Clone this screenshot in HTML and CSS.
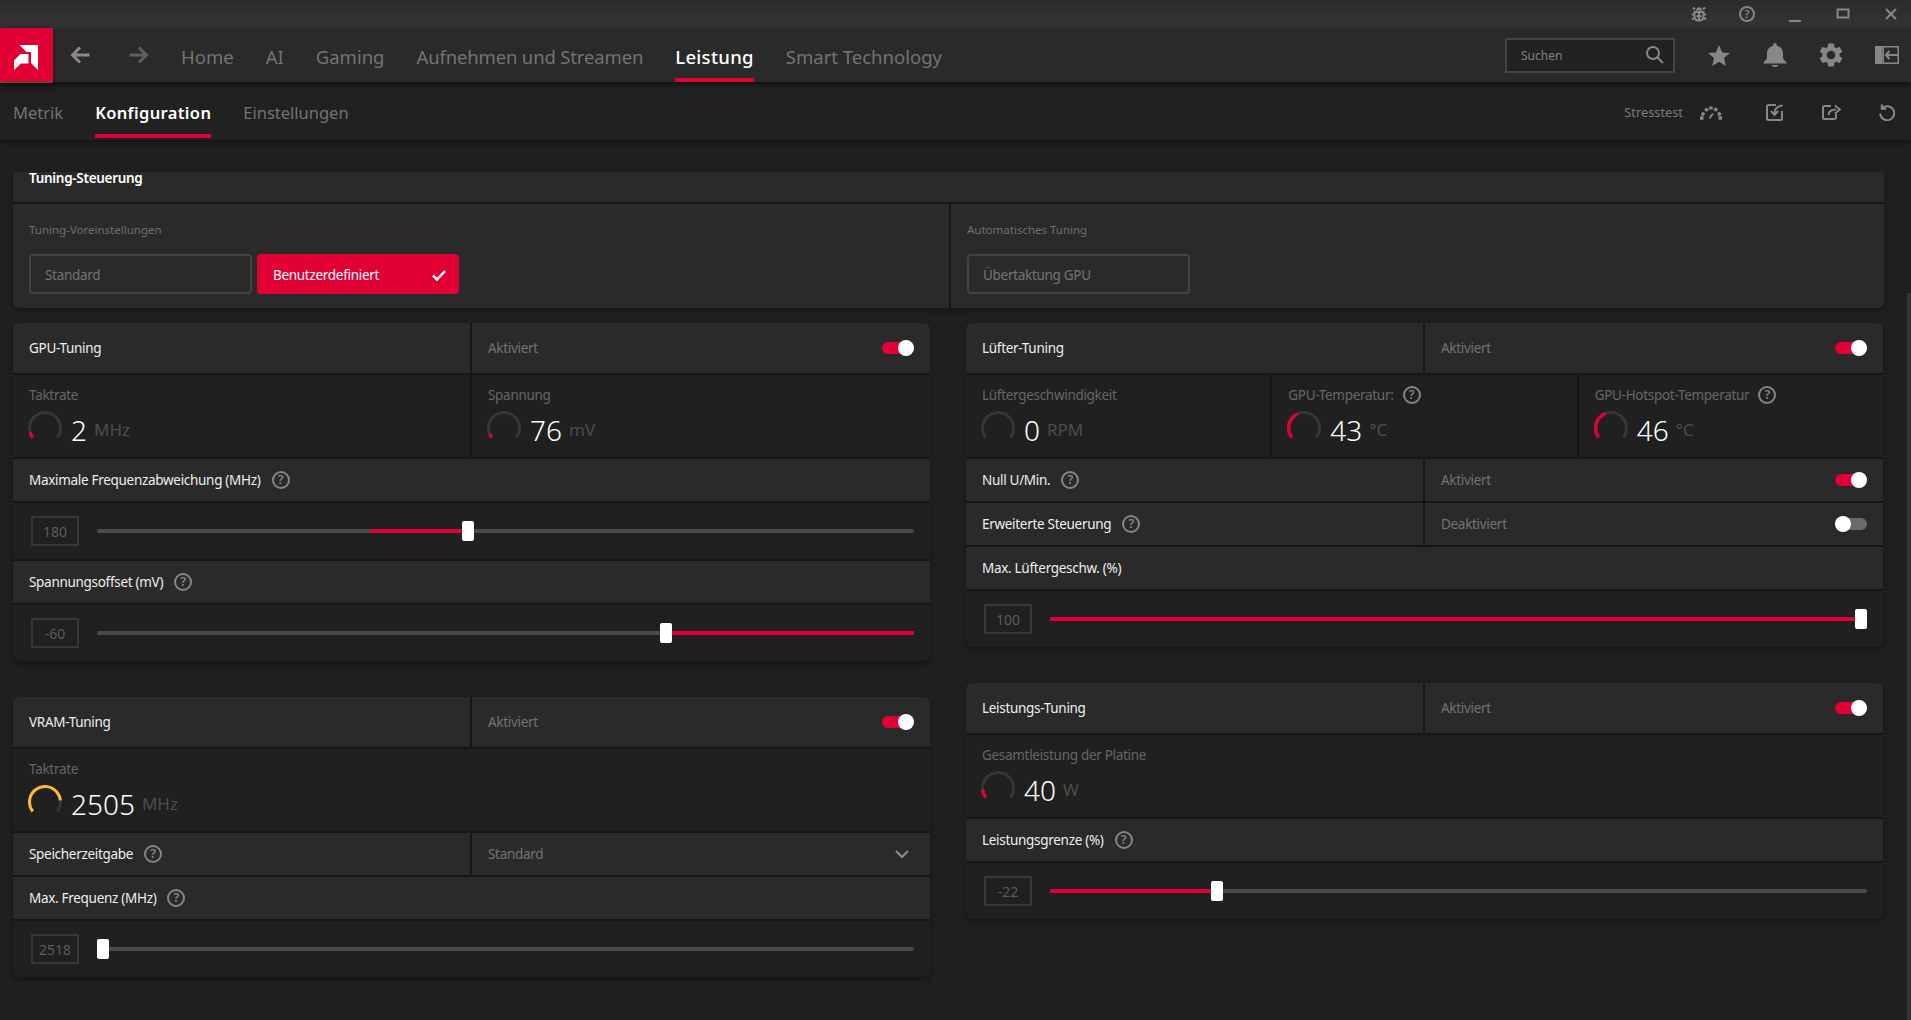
FILE: index.html
```html
<!DOCTYPE html>
<html lang="de">
<head>
<meta charset="utf-8">
<title>AMD Software</title>
<link rel="stylesheet" href="styles.css">
</head>
<body>
<div class="app">
  <header class="titlebar">
    <span class="win"><svg width="16" height="16" viewBox="0 0 16 16"><path class="ic-fill" d="M5 4.500c0-2 1.400-3.300 3-3.300s3 1.300 3 3.300z"/><path class="ic-line" d="M3.500 6h9v4.500c0 2.500-2 4-4.500 4s-4.500-1.500-4.500-4zM8 6v8.500M3.500 8.500H.8M12.500 8.500h2.700M3.500 11.500L1 13.500M12.500 11.500l2.500 2M4 3.500L2 1.500M12 3.500l2-2M5.800 9.500l1.400 1.500M10.200 9.500L8.800 11"/></svg></span>
    <span class="win"><span class="help help-top">?</span></span>
    <span class="win"><svg width="16" height="16" viewBox="0 0 16 16"><path class="ic-line" d="M2 15h12"/></svg></span>
    <span class="win"><svg width="16" height="16" viewBox="0 0 16 16"><path class="ic-line" d="M2.500 3.500h11v8h-11z"/></svg></span>
    <span class="win"><svg width="16" height="16" viewBox="0 0 16 16"><path class="ic-line" d="M3 3l10 10M13 3L3 13"/></svg></span>
  </header>

  <nav class="mainnav">
    <div class="logo"><svg width="24" height="25" viewBox="0 0 24 25"><path fill="#fff" d="M5.500 0H24v25l-7-7V7H12.500z"/><path fill="#fff" d="M0 25v-9.500L6.500 9h8v9.500H7L0 25z"/></svg></div>
    <svg class="arrow back" width="20" height="18" viewBox="0 0 20 18"><path d="M10 1.500L2.500 9l7.500 7.500M3 9h16.500"/></svg>
    <svg class="arrow fwd" width="20" height="18" viewBox="0 0 20 18"><path d="M10 1.500L17.500 9 10 16.500M17 9H.5"/></svg>
    <ul class="tabs main-tabs">
      <li>Home</li>
      <li>AI</li>
      <li>Gaming</li>
      <li class="tight">Aufnehmen und Streamen</li>
      <li class="active">Leistung</li>
      <li>Smart Technology</li>
    </ul>
    <div class="nav-right">
      <div class="search">
        <span>Suchen</span>
        <svg width="18" height="18" viewBox="0 0 18 18"><circle class="ic-line" cx="7" cy="7" r="6"/><path class="ic-line" d="M11.500 11.500L17 17"/></svg>
      </div>
      <span class="navicon"><svg width="22" height="21" viewBox="0 0 22 21"><path class="ic-fill" d="M11 0l3.200 7.400 7.800.6-6 5.100L17.800 21 11 16.800 4.200 21 6 13.100 0 8l7.800-.6z"/></svg></span>
      <span class="navicon"><svg width="24" height="24" viewBox="0 0 24 24"><path class="ic-fill" d="M12 0c1 0 1.800.8 1.800 1.800v.9C18 3.600 20 6.800 20 11v4.500l3.500 4V20.500H.5v-1l3.500-4V11c0-4.200 2-7.400 6.200-8.300v-.9C10.200.8 11 0 12 0zM8.500 22h7c-.5 1.300-2 2-3.500 2s-3-.7-3.500-2z"/></svg></span>
      <span class="navicon"><svg width="24" height="24" viewBox="2.600 2 18.800 20"><path class="ic-fill" d="M19.140 12.940c.04-.3.06-.61.06-.94 0-.32-.02-.64-.07-.94l2.030-1.580a.49.49 0 0 0 .12-.61l-1.920-3.320a.488.488 0 0 0-.59-.22l-2.390.96c-.5-.38-1.030-.7-1.620-.94l-.36-2.540a.484.484 0 0 0-.48-.41h-3.840c-.24 0-.43.17-.47.41l-.36 2.540c-.59.24-1.130.57-1.620.94l-2.390-.96c-.22-.08-.47 0-.59.22L2.740 8.870c-.12.21-.08.47.12.61l2.030 1.580c-.05.3-.09.63-.09.94s.02.64.07.94l-2.030 1.580a.49.49 0 0 0-.12.61l1.920 3.320c.12.22.37.29.59.22l2.390-.96c.5.38 1.030.7 1.620.94l.36 2.540c.05.24.24.41.48.41h3.840c.24 0 .44-.17.47-.41l.36-2.540c.59-.24 1.130-.56 1.620-.94l2.390.96c.22.08.47 0 .59-.22l1.920-3.320c.12-.22.07-.47-.12-.61l-2.010-1.580zM12 15.600c-1.980 0-3.600-1.620-3.600-3.600s1.620-3.600 3.600-3.600 3.600 1.620 3.600 3.600-1.620 3.600-3.600 3.600z"/></svg></span>
      <span class="navicon"><svg width="24" height="18" viewBox="0 0 24 18"><path class="ic-fill" d="M0 0h7.500v18H0z"/><path class="ic-fill" d="M7.500 0H24v18H7.500zm1.500 1.500v15h13.500v-15z" fill-rule="evenodd"/><path class="ic-line" d="M14.500 5L10.800 9l3.700 4M11 9h12"/></svg></span>
    </div>
  </nav>

  <nav class="subnav">
    <ul class="tabs sub-tabs">
      <li>Metrik</li>
      <li class="active">Konfiguration</li>
      <li>Einstellungen</li>
    </ul>
    <div class="sub-right">
      <span class="stress">Stresstest</span>
      <span class="navicon gauge-ic"><svg width="24" height="15" viewBox="0 0 24 15"><path class="ic-dash" d="M1 13h3.500M2.500 8.200l3 1.500M6.500 3.500l2 2.500M11.800 1.500l.2 3M17.500 3.200L16 6M21.800 8l-3 1.700M19.500 13H23"/><path class="ic-line" d="M10.500 13.500l3.500-5"/></svg></span>
      <span class="navicon"><svg width="18" height="17" viewBox="0 0 18 17"><path class="ic-line" d="M10 1H2.500A1.500 1.500 0 0 0 1 2.500v12A1.500 1.500 0 0 0 2.500 16h12a1.500 1.500 0 0 0 1.500-1.500V7"/><path class="ic-line" d="M16.500 1.500C11.500 2 8.500 5 8.500 9.500M5 6.800L8.500 11l3.700-4"/></svg></span>
      <span class="navicon"><svg width="19" height="16" viewBox="0 0 19 16"><path class="ic-line" d="M9 2H2.500A1.500 1.500 0 0 0 1 3.500v10A1.500 1.500 0 0 0 2.500 15h10a1.500 1.500 0 0 0 1.500-1.500V10"/><path class="ic-line" d="M6.500 11c.3-3.500 3-5.500 7.500-5.500M13 1.500L17.800 5.500 13 9.500"/></svg></span>
      <span class="navicon"><svg width="16" height="17" viewBox="0 0 16 17"><path class="ic-line" d="M3 4.500A7 7 0 1 1 1.200 9.500M2.800 .5v4.300h4.300"/></svg></span>
    </div>
  </nav>

  <main class="content">
    <section class="panel panel-top">
      <div class="row-light head-clip"><span class="title strong">Tuning-Steuerung</span></div>
      <div class="split-top">
        <div class="preset">
          <div class="small-label">Tuning-Voreinstellungen</div>
          <div class="btn-row">
            <div class="btn">Standard</div>
            <div class="btn btn-on">Benutzerdefiniert<svg width="14" height="11" viewBox="0 0 14 11"><path d="M1 5.500l4 4L13 1"/></svg></div>
          </div>
        </div>
        <div class="preset">
          <div class="small-label">Automatisches Tuning</div>
          <div class="btn-row"><div class="btn">Übertaktung GPU</div></div>
        </div>
      </div>
    </section>

    <div class="columns">
      <div class="col">
        <section class="panel">
          <div class="split head">
            <div class="cell"><span class="title">GPU-Tuning</span></div>
            <div class="cell between"><span class="muted">Aktiviert</span><span class="toggle on"></span></div>
          </div>
          <div class="split metrics">
            <div class="metric">
              <div class="m-label">Taktrate</div>
              <div class="m-val"><svg class="gauge" viewBox="0 0 34 34"><circle class="g-track" cx="17" cy="17" r="15.500" pathLength="100" stroke-dasharray="71 100" transform="rotate(142 17 17)"/><circle class="g-red" cx="17" cy="17" r="15.500" pathLength="100" stroke-dasharray="6 100" transform="rotate(142 17 17)"/></svg><span class="num">2</span><span class="unit">MHz</span></div>
            </div>
            <div class="metric">
              <div class="m-label">Spannung</div>
              <div class="m-val"><svg class="gauge" viewBox="0 0 34 34"><circle class="g-track" cx="17" cy="17" r="15.500" pathLength="100" stroke-dasharray="71 100" transform="rotate(142 17 17)"/><circle class="g-red" cx="17" cy="17" r="15.500" pathLength="100" stroke-dasharray="4 100" transform="rotate(142 17 17)"/></svg><span class="num">76</span><span class="unit">mV</span></div>
            </div>
          </div>
          <div class="bar"><span class="title">Maximale Frequenzabweichung (MHz)</span><span class="help">?</span></div>
          <div class="slider-row">
            <span class="vbox">180</span>
            <div class="track"><i class="fill" style="left:33.41%;width:11.26%"></i><b class="thumb" style="left:44.68%"></b></div>
          </div>
          <div class="bar"><span class="title">Spannungsoffset (mV)</span><span class="help">?</span></div>
          <div class="slider-row">
            <span class="vbox">-60</span>
            <div class="track"><i class="fill" style="left:70.38%;width:29.62%"></i><b class="thumb" style="left:68.91%"></b></div>
          </div>
        </section>

        <section class="panel">
          <div class="split head">
            <div class="cell"><span class="title">VRAM-Tuning</span></div>
            <div class="cell between"><span class="muted">Aktiviert</span><span class="toggle on"></span></div>
          </div>
          <div class="metrics solo">
            <div class="metric">
              <div class="m-label">Taktrate</div>
              <div class="m-val"><svg class="gauge" viewBox="0 0 34 34"><circle class="g-track" cx="17" cy="17" r="15.500" pathLength="100" stroke-dasharray="71 100" transform="rotate(142 17 17)"/><circle class="g-yellow" cx="17" cy="17" r="15.500" pathLength="100" stroke-dasharray="59 100" transform="rotate(142 17 17)"/></svg><span class="num">2505</span><span class="unit">MHz</span></div>
            </div>
          </div>
          <div class="split bar-split">
            <div class="cell"><span class="title">Speicherzeitgabe</span><span class="help">?</span></div>
            <div class="cell between"><span class="muted">Standard</span><svg class="chev" width="14" height="9" viewBox="0 0 14 9"><path d="M1 1l6 6 6-6"/></svg></div>
          </div>
          <div class="bar"><span class="title">Max. Frequenz (MHz)</span><span class="help">?</span></div>
          <div class="slider-row">
            <span class="vbox">2518</span>
            <div class="track"><b class="thumb" style="left:0"></b></div>
          </div>
        </section>
      </div>

      <div class="col">
        <section class="panel">
          <div class="split head">
            <div class="cell"><span class="title">Lüfter-Tuning</span></div>
            <div class="cell between"><span class="muted">Aktiviert</span><span class="toggle on"></span></div>
          </div>
          <div class="tri metrics">
            <div class="metric">
              <div class="m-label">Lüftergeschwindigkeit</div>
              <div class="m-val"><svg class="gauge" viewBox="0 0 34 34"><circle class="g-track" cx="17" cy="17" r="15.500" pathLength="100" stroke-dasharray="71 100" transform="rotate(142 17 17)"/></svg><span class="num">0</span><span class="unit">RPM</span></div>
            </div>
            <div class="metric">
              <div class="m-label">GPU-Temperatur:<span class="help">?</span></div>
              <div class="m-val"><svg class="gauge" viewBox="0 0 34 34"><circle class="g-track" cx="17" cy="17" r="15.500" pathLength="100" stroke-dasharray="71 100" transform="rotate(142 17 17)"/><circle class="g-red" cx="17" cy="17" r="15.500" pathLength="100" stroke-dasharray="29 100" transform="rotate(142 17 17)"/></svg><span class="num">43</span><span class="unit">°C</span></div>
            </div>
            <div class="metric">
              <div class="m-label">GPU-Hotspot-Temperatur<span class="help">?</span></div>
              <div class="m-val"><svg class="gauge" viewBox="0 0 34 34"><circle class="g-track" cx="17" cy="17" r="15.500" pathLength="100" stroke-dasharray="71 100" transform="rotate(142 17 17)"/><circle class="g-red" cx="17" cy="17" r="15.500" pathLength="100" stroke-dasharray="30 100" transform="rotate(142 17 17)"/></svg><span class="num">46</span><span class="unit">°C</span></div>
            </div>
          </div>
          <div class="split bar-split">
            <div class="cell"><span class="title">Null U/Min.</span><span class="help">?</span></div>
            <div class="cell between"><span class="muted">Aktiviert</span><span class="toggle on"></span></div>
          </div>
          <div class="split bar-split">
            <div class="cell"><span class="title">Erweiterte Steuerung</span><span class="help">?</span></div>
            <div class="cell between"><span class="muted">Deaktiviert</span><span class="toggle"></span></div>
          </div>
          <div class="bar"><span class="title">Max. Lüftergeschw. (%)</span></div>
          <div class="slider-row">
            <span class="vbox">100</span>
            <div class="track"><i class="fill" style="left:0;width:98.53%"></i><b class="thumb" style="left:98.53%"></b></div>
          </div>
        </section>

        <section class="panel">
          <div class="split head">
            <div class="cell"><span class="title">Leistungs-Tuning</span></div>
            <div class="cell between"><span class="muted">Aktiviert</span><span class="toggle on"></span></div>
          </div>
          <div class="metrics solo">
            <div class="metric">
              <div class="m-label">Gesamtleistung der Platine</div>
              <div class="m-val"><svg class="gauge" viewBox="0 0 34 34"><circle class="g-track" cx="17" cy="17" r="15.500" pathLength="100" stroke-dasharray="71 100" transform="rotate(142 17 17)"/><circle class="g-red" cx="17" cy="17" r="15.500" pathLength="100" stroke-dasharray="9 100" transform="rotate(142 17 17)"/></svg><span class="num">40</span><span class="unit">W</span></div>
            </div>
          </div>
          <div class="bar"><span class="title">Leistungsgrenze (%)</span><span class="help">?</span></div>
          <div class="slider-row">
            <span class="vbox">-22</span>
            <div class="track"><i class="fill" style="left:0;width:19.71%"></i><b class="thumb" style="left:19.71%"></b></div>
          </div>
        </section>
      </div>
    </div>
    <div class="scrollthumb"></div>
  </main>
</div>
</body>
</html>
```
FILE: styles.css
```css
* { box-sizing: border-box; }
html, body { margin: 0; height: 100%; overflow: hidden; background: #202020; }
body { font-family: "Noto Sans", "Open Sans", sans-serif; color: #eee; font-size: 13.5px; letter-spacing: -.3px; }
ul { list-style: none; margin: 0; padding: 0; }
svg { display: block; }
.app { display: flex; flex-direction: column; height: 1020px; }

.ic-fill { fill: #878787; }
.ic-line { fill: none; stroke: #878787; stroke-width: 2; }
.ic-dash { fill: none; stroke: #878787; stroke-width: 3.5; }

.titlebar { height: 28px; flex: none; display: flex; justify-content: flex-end; align-items: center; gap: 16px; padding-right: 4px; background: linear-gradient(#2b2b2b, #353535); }
.win { width: 32px; height: 16px; display: flex; justify-content: center; align-items: center; }

.mainnav { height: 54px; flex: none; display: flex; align-items: stretch; background: #2a2a2a; position: relative; z-index: 3; box-shadow: 0 2px 6px rgba(0,0,0,.6); }
.logo { width: 53px; height: 55px; flex: none; background: #e00034; border-bottom: 2px solid #8d3236; display: flex; justify-content: center; align-items: center; padding: 6px 2px 0 0; box-shadow: 0 2px 4px rgba(0,0,0,.5); }
.arrow { align-self: center; flex: none; fill: none; stroke-width: 3; }
.back { margin-left: 17px; stroke: #8a8a8a; }
.fwd { margin-left: 39px; stroke: #5f5f5f; }
.tabs { display: flex; gap: 32px; letter-spacing: 0; }
.tabs li { color: #737373; position: relative; display: flex; align-items: center; }
.tabs li.active { color: #fff; font-weight: 500; }
.tabs li.active::after { content: ""; position: absolute; left: 0; right: 0; bottom: 0; height: 4px; background: #e00034; }
.main-tabs { margin-left: 32px; font-size: 18.5px; }
.main-tabs li { padding-top: 2px; }
.main-tabs li.tight { letter-spacing: -.15px; }
.main-tabs li.active { letter-spacing: .3px; }
.nav-right { margin-left: auto; display: flex; align-items: center; gap: 32px; padding-right: 12px; }
.search { width: 170px; height: 35px; border: 2px solid #444; background: #222; display: flex; align-items: center; justify-content: space-between; padding: 0 9px 0 14px; font-size: 12px; letter-spacing: 0; color: #808080; }
.navicon { width: 24px; display: flex; justify-content: center; flex: none; }

.subnav { height: 58px; flex: none; display: flex; align-items: stretch; background: #212121; padding: 0 12px 2px 13px; position: relative; z-index: 2; box-shadow: 0 2px 5px rgba(0,0,0,.45); }
.sub-tabs { font-size: 16.5px; height: 56px; }
.sub-tabs li { padding-top: 4px; }
.sub-tabs li.active { font-weight: 600; letter-spacing: .35px; }
.sub-right { margin-left: auto; display: flex; align-items: center; gap: 32px; padding-top: 4px; }
.stress { font-size: 12.8px; letter-spacing: 0; color: #7b7b7b; margin-right: -16px; }
.gauge-ic { margin-right: 8px; }

.content { flex: 1; position: relative; overflow: hidden; padding: 32px 27px 0 13px; background: #202020; }
.panel { background: #161616; border-radius: 6px; display: flex; flex-direction: column; gap: 2px; box-shadow: 0 3px 7px rgba(0,0,0,.35); overflow: hidden; }
.panel-top { border-radius: 0 0 6px 6px; overflow: visible; }
.head-clip { height: 30px; line-height: 12px; padding-left: 16px; }
.row-light { background: #2a2a2a; }
.title { color: #eee; white-space: nowrap; }
.strong { font-weight: 600; color: #fff; }
.split-top { display: grid; grid-template-columns: 936px 1fr; gap: 2px; height: 104px; }
.preset { background: #2a2a2a; padding: 16px 16px 0; }
.preset:first-child { border-bottom-left-radius: 6px; }
.preset:last-child { border-bottom-right-radius: 6px; }
.small-label { font-size: 11.5px; letter-spacing: 0; line-height: 20px; color: #6f6f6f; }
.btn-row { display: flex; gap: 5px; margin-top: 14px; }
.btn { width: 223px; height: 40px; border: 2px solid #434343; border-radius: 4px; display: flex; align-items: center; justify-content: space-between; padding: 2px 14px 0; color: #737373; }
.btn-on { width: 202px; background: #e00034; border-color: #e00034; color: #fff; }
.btn-on svg { fill: none; stroke: #fff; stroke-width: 2.5; margin-right: -3px; }

.columns { display: grid; grid-template-columns: 917px 917px; gap: 36px; margin-top: 15px; }
.col { display: flex; flex-direction: column; gap: 36px; align-items: stretch; }

.split { display: grid; grid-template-columns: 457px 1fr; gap: 2px; }
.tri { display: grid; grid-template-columns: repeat(3, 1fr); gap: 2px; }
.solo { display: grid; }
.head { height: 50px; }
.bar-split { height: 42px; }
.cell { background: #2a2a2a; display: flex; align-items: center; padding: 0 16px; }
.between { justify-content: space-between; }
.muted { color: #737373; }
.metrics { height: 82px; }
.metric { background: #202020; padding: 10px 16px 0; }
.m-label { height: 20px; line-height: 20px; color: #666; display: flex; align-items: center; }
.m-label .help { margin-left: 9px; }
.m-val { display: flex; align-items: center; margin: 6px 0 0 -1px; height: 34px; }
.gauge { width: 34px; height: 34px; flex: none; margin-right: 9px; }
.gauge circle { fill: none; stroke-width: 3; }
.g-track { stroke: #363636; }
.gauge .g-red { stroke: #e00034; stroke-width: 3.5; }
.g-yellow { stroke: #fdbb2d; }
.num { font-size: 28px; font-weight: 300; letter-spacing: 0; line-height: 34px; color: #fff; margin-top: 3px; }
.unit { font-size: 17px; letter-spacing: 0; color: #4d4d4d; margin: 2px 0 0 7px; }
.bar { height: 42px; background: #2a2a2a; display: flex; align-items: center; padding: 0 16px; }
.help { width: 18px; height: 18px; border: 2px solid #858585; border-radius: 50%; color: #858585; font-size: 12.5px; letter-spacing: 0; font-weight: 600; line-height: 14px; text-align: center; margin-left: 11px; flex: none; }
.help-top { width: 16px; height: 16px; margin: 0; font-size: 11px; line-height: 12px; }
.toggle { width: 32px; height: 16px; position: relative; flex: none; }
.toggle::before { content: ""; position: absolute; left: 0; right: 0; top: 2px; height: 12px; border-radius: 6px; background: #6a6a6a; }
.toggle::after { content: ""; position: absolute; left: 0; top: 0; width: 16px; height: 16px; border-radius: 50%; background: #fff; }
.toggle.on::before { background: #e00034; }
.toggle.on::after { left: 16px; }
.chev { fill: none; stroke: #8a8a8a; stroke-width: 2.2; margin-right: 5px; }

.slider-row { height: 56px; background: #202020; display: flex; align-items: center; padding: 0 16px 0 18px; }
.vbox { width: 48px; height: 30px; flex: none; border: 2px solid #373737; display: flex; align-items: center; justify-content: center; color: #5c5c5c; font-size: 14px; letter-spacing: 0; }
.track { flex: 1; height: 4px; margin-left: 18px; background: #4a4a4a; border-radius: 2px; position: relative; }
.fill { position: absolute; top: 0; height: 4px; background: #e00034; }
.thumb { position: absolute; top: -8px; width: 12px; height: 20px; background: #fff; border-radius: 2px; }
.scrollthumb { position: absolute; right: 0; top: 153px; bottom: 0; width: 4px; background: #333; }
```
